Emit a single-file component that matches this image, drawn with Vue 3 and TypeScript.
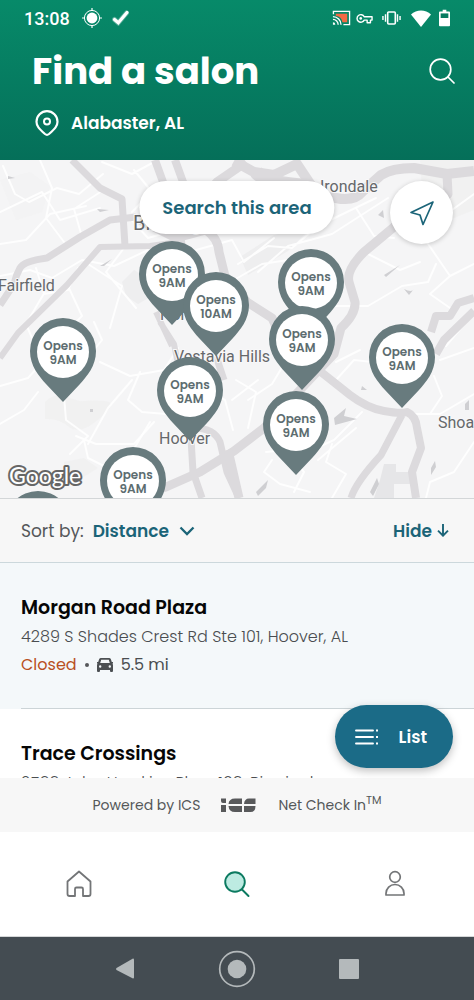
<script setup lang="ts">
interface Pin {
  x: number
  y: number
  time: string
}

interface Salon {
  name: string
  address: string
  status: string
  distance: string
}

const MAP_WIDTH = 474

/* x is the pin's centre line, y its top edge, in map units */
const pins: Pin[] = [
  { x: 172, y: 81, time: '9AM' },
  { x: 216, y: 112, time: '10AM' },
  { x: 311, y: 89, time: '9AM' },
  { x: 302, y: 146, time: '9AM' },
  { x: 402, y: 164, time: '9AM' },
  { x: 63, y: 158, time: '9AM' },
  { x: 190, y: 197, time: '9AM' },
  { x: 296, y: 231, time: '9AM' },
  { x: 133, y: 287, time: '9AM' },
  { x: 38, y: 331, time: '9AM' },
]

const salons: Salon[] = [
  {
    name: 'Morgan Road Plaza',
    address: '4289 S Shades Crest Rd Ste 101, Hoover, AL',
    status: 'Closed',
    distance: '5.5 mi',
  },
  {
    name: 'Trace Crossings',
    address: '2539 John Hawkins Pkwy 109, Birmingham',
    status: 'Closed',
    distance: '5.9 mi',
  },
]

const pinStyle = (pin: Pin) => ({
  left: `${(pin.x / MAP_WIDTH) * 100}%`,
  top: `${pin.y}px`,
})
</script>

<template>
  <div class="screen">
    <header class="header">
      <div class="status">
        <time class="clock">13:08</time>
        <svg class="s-gps" viewBox="0 0 20 20" aria-hidden="true">
          <circle cx="10" cy="10" r="5.4" fill="#fff" />
          <circle cx="10" cy="10" r="7.6" fill="none" stroke="#fff" stroke-width="1" />
          <path d="M10 0v3M10 17v3M0 10h3M17 10h3" stroke="#fff" stroke-width="1.2" />
        </svg>
        <svg class="s-check" viewBox="0 0 18 16" aria-hidden="true">
          <path d="M2.500 9.500 6.300 12.800 14.500 3" fill="none" stroke="#fff" stroke-opacity=".3" stroke-width="5" stroke-linecap="round" />
          <path d="M2.500 9.500 6.300 12.800 15 2.500" fill="none" stroke="#fff" stroke-width="3.200" stroke-linecap="round" />
        </svg>
        <span class="grow"></span>
        <svg class="s-cast" viewBox="0 0 20 16" aria-hidden="true">
          <path d="M4 3.5h12v9h-5C10.500 8.500 8 6 4 5.500z" fill="#f26a45" />
          <path d="M1.500 4V1h17v14H12" fill="none" stroke="#fff" stroke-width="1.4" />
          <path d="M1 6.500a8.500 8.500 0 0 1 8.500 8.500M1 9.500A5.500 5.500 0 0 1 6.500 15" fill="none" stroke="#fff" stroke-width="1.4" />
          <path d="M1 12.500A2.500 2.500 0 0 1 3.500 15H1z" fill="#fff" />
        </svg>
        <svg class="s-key" viewBox="0 0 18 11" aria-hidden="true">
          <path d="M8.700 3.700h8.300v3.500h-1.700V10h-3.500V7.200H8.700a4 4 0 1 1 0-3.500z" fill="none" stroke="#fff" stroke-width="1.500" stroke-linejoin="round" />
          <circle cx="5" cy="5.400" r="1.400" fill="#fff" />
        </svg>
        <svg class="s-vibrate" viewBox="0 0 20 16" aria-hidden="true">
          <rect x="6" y="1.700" width="8" height="12.600" rx="1" fill="none" stroke="#fff" stroke-width="1.700" />
          <path d="M3.700 4v8M1 6v4M16.300 4v8M19 6v4" stroke="#fff" stroke-width="1.500" />
        </svg>
        <svg class="s-wifi" viewBox="0 0 20 17" aria-hidden="true">
          <path d="M0 4.500C5.500-.8 14.500-.8 20 4.500L10 17z" fill="#fff" />
        </svg>
        <svg class="s-battery" viewBox="0 0 12 18" aria-hidden="true">
          <path d="M4 0h4v2h3q1 0 1 1v14q0 1-1 1H1q-1 0-1-1V3q0-1 1-1h3z" fill="#fff" />
          <path d="M1.800 4h8.400v5H1.800z" fill="#067b60" />
        </svg>
      </div>
      <div class="title-row">
        <h1>Find a salon</h1>
        <button class="icon-button" type="button" aria-label="Search">
          <svg viewBox="0 0 26 26" width="26" height="26">
            <circle cx="11.500" cy="11.500" r="10.300" fill="none" stroke="#fff" stroke-width="1.700" />
            <path d="m19 19 6 6" stroke="#fff" stroke-width="1.700" stroke-linecap="round" />
          </svg>
        </button>
      </div>
      <div class="place">
        <svg viewBox="0 0 24 26" width="24" height="26" aria-hidden="true">
          <path d="M12 1.200A10.500 10.500 0 0 0 1.500 11.700c0 4.300 2.300 6.800 8.500 12.300q2 1.600 4 0c6.200-5.500 8.500-8 8.500-12.300A10.500 10.500 0 0 0 12 1.200z" fill="none" stroke="#fff" stroke-width="2.200" />
          <circle cx="12" cy="11.500" r="3" fill="none" stroke="#fff" stroke-width="2" />
        </svg>
        <span>Alabaster, AL</span>
      </div>
    </header>

    <section class="map" aria-label="Salon map">
      <svg class="tiles" viewBox="0 0 474 338" preserveAspectRatio="none" aria-hidden="true">
        <rect width="474" height="338" fill="#f5f5f6" />
        <g fill="#eeeeef">
          <path d="M122 122l12-12 14 8 4 18-14 8-12-8z" />
          <path d="M240 97l34-22 38-8-24 24-40 24z" />
          <path d="M45 242q10-10 22-5t18 4 20 0-6 18-30 8-24-8zM64 302l20-4 14 10-16 10-18-6z" opacity=".6" />
          <path d="M384 304h12v8h14v12h-16v14h-20l6-18z" fill="#e6e6e8" />
          <path d="M0 20l30-8 20 14-8 26-26 8z" opacity=".3" />
          <path d="M420 0h54v50l-30 12-22-30z" opacity=".6" />
        </g>
        <g fill="none" stroke="#fff" stroke-opacity=".85" stroke-width="2" stroke-linejoin="round" stroke-linecap="round">
          <path d="M3 6l12 28 14 8 28-14 22 6 24-20M0 52l42-20 18 28 40-12M40 0l12 28-6 30 18 24M82 77l-8-28 28-18M0 84l26-4 24-26 36-8" />
          <path d="M0 116l30-6 22 8 30-18 32 6 34-16M36 108l8 26 24-4 10-22M46 130l-20 34 6 14M68 126l14 30-16 16M88 104l34 22-12 42M124 88l-18 24 30 36" />
          <path d="M134 10l18 22-20 20M102 2l30 12 22-12M128 56l20 22 28-8M64 208l22-8 16-20-8-18M100 202l30 14 34-6 14-22M64 236l2 24 22 16-18 18M76 276l20 8 38 0 20-22M132 220l-24 28-20 36M140 212l-12 28 14 12 24 2M84 280l4 18 20 10" />
          <path d="M0 264l24-14 14-18M0 226l28-8 18-20M150 262l-18 30M196 90l36-10 12 22 30-24M234 120l28-16 26-4M238 104l30-18 24 2 26-22 58-28M258 112l30-26 44-12 56-36" />
          <path d="M334 146l34 0 34-20 26-4 8-18M424 78l26 38 24-12M450 116l-20 18 20 14M424 78l-6-34M452 50l22-16M356 48l18 28 20 2M364 92l36 18 20-8" />
          <path d="M236 220l20 12-8 36M248 240l24-16 18-30M232 240l26-20M266 292l20-2 18 22-10 20M272 300l-8 12 16 12 30 8M312 290l22-10 28-28M332 284l-6 18 20 12-14 24M318 300l38-32M336 220l18-20 18 2M336 202l24-12" />
          <path d="M412 254l28 0 34-20M474 282l-20 30-24 10-4 16M430 254l12-18-8-20M440 200l34-12M446 186l20-24M205 230l20 10 8 30" />
        </g>
        <g fill="none" stroke="#dcdadd" stroke-linejoin="round">
          <path d="M72 0L100 28L122 39L125 86" stroke-width="7" />
          <path d="M136 57L110 60L80 77L47 98Q24 101 20 108T14 124L0 145" stroke-width="7" />
          <path d="M185 81L150 86L100 87L67 125L18 173L0 198" stroke-width="6" />
          <path d="M155 0L163 22L174 56M175 0L183 22L204 70" stroke-width="8" />
          <path d="M246 2L217 22L196 45M140 60L176 78L206 70Q218 78 219 92L225 116L247 142L272 158L290 196" stroke-width="9" />
          <path d="M234 1L254 12L274 15L297 4L311 25Q320 38 336 38Q354 42 363 31L381 15Q392 8 414 8L447 14L474 11" stroke-width="10" />
          <path d="M256 12q10 12 55 14" stroke-width="14" />
          <path d="M447 14L448 34L430 52L394 67L364 92Q346 110 349 122L355 142Q356 154 341 168L334 194L264 268L234 291L200 312L166 327L130 338" stroke-width="9" />
          <path d="M303 200L321 212L350 235Q367 248 384 251T407 252Q416 256 417 268L421 288L412 312L416 338" stroke-width="8" />
          <path d="M402 255L381 295Q356 322 351 338" stroke-width="7" />
          <path d="M474 138L458 143L450 156L436 156L431 172M474 151L444 180L436 194" stroke-width="8" />
          <path d="M160 162L174 184L178 204M156 152L172 186" stroke-width="6" />
          <path d="M190 262L193 312L202 338M194 268Q214 268 220 282L227 312L239 338" stroke-width="7" />
          <path d="M216 196L224 220" stroke-width="7" />
          <path d="M228 290L239 338" stroke-width="9" />
        </g>
        <g fill="#cfcfd2">
          <path d="M8 16l7 2-7 1zM97 49l12 1-9 2zM60 60l10 6M100 106l12-7-8 7zM378 55l5-5 1 8zM384 115l16-10-14 12zM404 129q8 4 10 0l-5 6zM334 258l12-10-2 8 13 3-22 6zM362 226l5 4-6 0zM465 244l4-4v10h-4zM431 308l4-7 1 6-5 8zM256 332l12-12-2 8-8 8zM370 332l7-14 2 6-6 12zM90 249h3v3h-3z" />
        </g>
        <g class="towns">
          <text x="133" y="70" font-size="20">Birmingham</text>
          <text x="320" y="32">Irondale</text>
          <text x="-2" y="131">Fairfield</text>
          <text x="160" y="160">Homewood</text>
          <text x="174" y="202">Vestavia Hills</text>
          <text x="159" y="284">Hoover</text>
          <text x="438" y="268">Shoal Creek</text>
        </g>
      </svg>

      <button v-for="(pin, i) in pins" :key="i" class="pin" type="button" :style="pinStyle(pin)">
        <svg viewBox="0 0 66 84" aria-hidden="true">
          <path d="M33 0A33 33 0 0 0 0 33C0 48 9 58 16 66L33 84L50 66C57 58 66 48 66 33A33 33 0 0 0 33 0z" fill="#687b7e" />
          <circle cx="33" cy="34" r="26" fill="#fff" />
        </svg>
        <span class="pin-text">Opens<br />{{ pin.time }}</span>
      </button>

      <svg class="google" viewBox="0 0 80 34" role="img" aria-label="Google">
        <text x="4" y="20">Google</text>
      </svg>
      <button class="search-area" type="button">Search this area</button>
      <button class="locate" type="button" aria-label="Use my location">
        <svg viewBox="0 0 26 26" width="26" height="26">
          <path d="M24 2 2 12.500 11 15 14 24.500z" fill="none" stroke="#1b6478" stroke-width="1.700" stroke-linejoin="round" />
        </svg>
      </button>
    </section>

    <div class="sort">
      <label for="sort-by">Sort by:</label>
      <select id="sort-by">
        <option>Distance</option>
      </select>
      <svg viewBox="0 0 16 10" width="16" height="10" aria-hidden="true">
        <path d="m1.500 1.500 6.500 6.500 6.500-6.500" fill="none" stroke="#1b6478" stroke-width="2.300" />
      </svg>
      <span class="grow"></span>
      <button class="hide" type="button">
        Hide
        <svg viewBox="0 0 12 13" width="12" height="13" aria-hidden="true">
          <path d="M6 0v11.500M1 6.700l5 5 5-5" fill="none" stroke="#1b6478" stroke-width="1.900" />
        </svg>
      </button>
    </div>

    <main class="results">
      <ul>
        <li v-for="salon in salons" :key="salon.name" class="salon">
          <h2>{{ salon.name }}</h2>
          <p>{{ salon.address }}</p>
          <p class="meta">
            <span class="closed">{{ salon.status }}</span>
            <span class="dot"></span>
            <svg viewBox="0 0 16 14" width="16" height="14" aria-hidden="true">
              <path fill-rule="evenodd" d="M4 0h8q1.400 0 1.900 1.300L14.800 4H16v1.500h-.7q.7.600.7 1.700V13q0 1-1 1h-1q-1 0-1-1v-1H3v1q0 1-1 1H1q-1 0-1-1V7.200q0-1.100.7-1.700H0V4h1.200l.9-2.700Q2.600 0 4 0zm.2 1.700L3.200 5h9.600l-1-3.300zM3.200 7.300a1.200 1.200 0 1 0 0 2.400 1.200 1.200 0 0 0 0-2.400zm9.600 0a1.200 1.200 0 1 0 0 2.400 1.200 1.200 0 0 0 0-2.400z" fill="#4c5053" />
            </svg>
            <span>{{ salon.distance }}</span>
          </p>
        </li>
      </ul>
      <button class="list-button" type="button">
        <svg viewBox="0 0 24 16" width="24" height="16" aria-hidden="true">
          <path d="M1 1.500h17M1 8h17M1 14.500h17" stroke="#fff" stroke-width="1.900" stroke-linecap="round" />
          <path d="M21 .5h2v2h-2zM21 7h2v2h-2zM21 13.500h2v2h-2z" fill="#fff" />
        </svg>
        List
      </button>
    </main>

    <div class="powered">
      <span>Powered by ICS</span>
      <svg viewBox="0 0 36 14" width="36" height="14" role="img" aria-label="ICS">
        <g fill="#58595b">
          <path d="M0 .5h5V5H2Q0 5 0 3zM0 7h5v7H0z" />
          <path d="M21 .5V6H7.500Q8 .5 14 .5zM7.500 8H21v6h-7q-6 0-6.500-6z" />
          <path d="M34.500.5V6H23Q23.500.5 28 .5zM34.500 8q0 6-5 6H23V8z" />
        </g>
      </svg>
      <span>Net Check In<sup>TM</sup></span>
    </div>

    <nav class="tabs" aria-label="Main">
      <a href="#home" aria-label="Home">
        <svg viewBox="0 0 26 28" width="26" height="28">
          <path d="M1.500 11.500 13 1.500l11.500 10V24q0 2-2 2H17v-7q0-1.500-1.500-1.500h-5Q9 17.500 9 19v7H3.500q-2 0-2-2z" fill="none" stroke="#737577" stroke-width="1.800" stroke-linejoin="round" />
        </svg>
      </a>
      <a href="#search" aria-label="Search" aria-current="page">
        <svg viewBox="0 0 26 28" width="26" height="28">
          <circle cx="11" cy="12" r="9.800" fill="#bdebe2" stroke="#0b7a60" stroke-width="1.900" />
          <path d="m18 19.500 6.500 6.500" stroke="#0b7a60" stroke-width="1.900" stroke-linecap="round" />
        </svg>
      </a>
      <a href="#profile" aria-label="Profile">
        <svg viewBox="0 0 26 28" width="26" height="28">
          <circle cx="13" cy="7" r="5.300" fill="none" stroke="#737577" stroke-width="1.700" />
          <path d="M4 25v-1.500a9 9 0 0 1 18 0V25z" fill="none" stroke="#737577" stroke-width="1.700" stroke-linejoin="round" />
        </svg>
      </a>
    </nav>

    <div class="system">
      <button type="button" aria-label="Back">
        <svg viewBox="0 0 38 38" width="38" height="38"><path d="M10.500 18 27 8.500q1 0 1 1v18q0 1-1 1L10.500 20q-1-1 0-2z" fill="#b4b9bb" /></svg>
      </button>
      <button type="button" aria-label="Home screen">
        <svg viewBox="0 0 38 38" width="38" height="38">
          <circle cx="19" cy="19" r="17.300" fill="none" stroke="#b4b9bb" stroke-width="1.700" />
          <circle cx="19" cy="19" r="9.300" fill="#b4b9bb" />
        </svg>
      </button>
      <button type="button" aria-label="Recent apps">
        <svg viewBox="0 0 38 38" width="38" height="38"><rect x="9" y="9" width="20" height="20" rx="1" fill="#b4b9bb" /></svg>
      </button>
    </div>
  </div>
</template>

<style>
body {
  margin: 0;
}
</style>

<style scoped>
.screen {
  display: flex;
  flex-direction: column;
  height: 100vh;
  overflow: hidden;
  background: #fff;
  color: #55585a;
  font-family: Poppins, Inter, "Open Sans", sans-serif;
  font-size: 16px;
}

button,
select {
  margin: 0;
  padding: 0;
  border: 0;
  background: none;
  color: inherit;
  font: inherit;
  cursor: pointer;
}

svg {
  display: block;
  flex: none;
}

.grow {
  flex: 1;
}

.header {
  flex: none;
  padding: 0 16px 20px 24px;
  background: linear-gradient(#078a69, #056f59);
  color: #fff;
}

.status {
  display: flex;
  align-items: center;
  height: 36px;
  padding-right: 8px;
}

.clock {
  font-family: Roboto, sans-serif;
  font-size: 18px;
  font-weight: 500;
  margin-right: 12px;
}

.s-gps { width: 20px; height: 20px; margin-right: 10px; }
.s-check { width: 18px; height: 16px; }
.s-cast { width: 19px; height: 16px; margin-right: 5px; }
.s-key { width: 17px; height: 11px; margin-right: 9px; }
.s-vibrate { width: 19px; height: 16px; margin-right: 10px; }
.s-wifi { width: 20px; height: 17px; margin-right: 8px; }
.s-battery { width: 11px; height: 18px; }

.title-row {
  display: flex;
  align-items: center;
  justify-content: space-between;
  height: 70px;
  padding: 0 3px 0 8px;
}

h1 {
  margin: 0;
  font-size: 37px;
  font-weight: 700;
}

.place {
  display: flex;
  align-items: center;
  gap: 12px;
  height: 34px;
  padding-left: 11px;
  font-size: 17px;
  font-weight: 600;
}

.map {
  position: relative;
  flex: none;
  height: 338px;
  overflow: hidden;
  border-bottom: 1px solid #d3d6d8;
}

.tiles {
  width: 100%;
  height: 100%;
}

.towns {
  font-size: 16px;
}

.towns text {
  fill: #66686b;
  stroke: #f8f8f9;
  stroke-width: 2px;
  paint-order: stroke;
  font-family: Roboto, sans-serif;
}

.pin {
  position: absolute;
  width: 66px;
  height: 84px;
  margin-left: -33px;
}

.pin-text {
  position: absolute;
  top: 21px;
  left: 0;
  width: 100%;
  color: #5d6d70;
  font-size: 12px;
  font-weight: 600;
  line-height: 14px;
  text-align: center;
}

.google {
  position: absolute;
  left: 5px;
  bottom: 0;
  width: 80px;
  height: 34px;
}

.google text {
  fill: #fff;
  stroke: #666;
  stroke-width: 4px;
  stroke-linejoin: round;
  paint-order: stroke;
  font-family: Lato, sans-serif;
  font-size: 23px;
}

.search-area {
  position: absolute;
  top: 21px;
  left: 50%;
  transform: translateX(-50%);
  height: 53px;
  padding: 0 23px;
  border-radius: 27px;
  background: #fff;
  box-shadow: 0 1px 5px rgba(0, 0, 0, 0.2);
  color: #1b6478;
  font-size: 18px;
  font-weight: 600;
  white-space: nowrap;
}

.locate {
  position: absolute;
  top: 21px;
  right: 21px;
  display: grid;
  place-items: center;
  width: 63px;
  height: 63px;
  border-radius: 50%;
  background: #fff;
  box-shadow: 0 1px 5px rgba(0, 0, 0, 0.2);
}

.sort {
  display: flex;
  flex: none;
  align-items: center;
  gap: 9px;
  height: 63px;
  padding: 0 25px 0 21px;
  border-bottom: 1px solid #ccd8dc;
  background: #f7f7f7;
  font-size: 17px;
}

.sort select {
  appearance: none;
  color: #1b6478;
  font-weight: 600;
}

.hide {
  display: flex;
  align-items: center;
  gap: 5px;
  color: #1b6478;
  font-weight: 600;
}

.results {
  position: relative;
  flex: 1;
  min-height: 0;
}

ul {
  height: 100%;
  margin: 0;
  padding: 0;
  overflow: hidden;
  list-style: none;
}

.salon {
  position: relative;
  padding: 31px 21px 30px;
}

.salon:first-child {
  background: #f4f8fa;
}

.salon:first-child::after {
  position: absolute;
  right: 0;
  bottom: 0;
  left: 21px;
  height: 1px;
  background: #ccd4d7;
  content: "";
}

h2 {
  margin: 0 0 1px;
  color: #060606;
  font-size: 19px;
  font-weight: 600;
  line-height: 28px;
}

p {
  margin: 0;
  color: #4a4d50;
  font-size: 16px;
  font-weight: 300;
  line-height: 28px;
  white-space: nowrap;
}

.meta {
  display: flex;
  align-items: center;
  gap: 8px;
  font-weight: 400;
}

.closed {
  color: #b9501f;
}

.dot {
  width: 4px;
  height: 4px;
  border-radius: 50%;
  background: #55585a;
}

.list-button {
  position: absolute;
  right: 21px;
  bottom: 10px;
  display: flex;
  align-items: center;
  gap: 20px;
  height: 63px;
  padding: 0 26px 0 20px;
  border-radius: 32px;
  background: #1b6b87;
  box-shadow: 0 3px 8px rgba(0, 0, 0, 0.25);
  color: #fff;
  font-size: 17px;
  font-weight: 600;
}

.powered {
  display: flex;
  flex: none;
  align-items: center;
  justify-content: center;
  gap: 21px;
  height: 54px;
  background: #f7f7f7;
  font-size: 14px;
}

sup {
  font-size: 11px;
  line-height: 0;
}

.tabs {
  display: grid;
  flex: none;
  grid-template-columns: repeat(3, 1fr);
  height: 104px;
  border-bottom: 1px solid #d5d7d8;
}

.tabs a {
  display: grid;
  place-items: center;
}

.system {
  display: flex;
  flex: none;
  align-items: center;
  justify-content: center;
  gap: 74px;
  height: 63px;
  background: #444c52;
}
</style>
